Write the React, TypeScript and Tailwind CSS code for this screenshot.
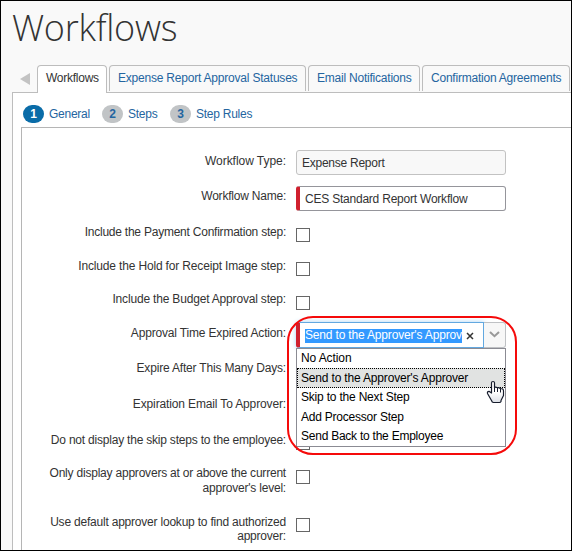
import { ReactNode } from "react";

const tabs = [
  { label: "Workflows", box: "w-[70px] tracking-[-0.25px]", active: true },
  { label: "Expense Report Approval Statuses", box: "w-[197px] tracking-[-0.21px]" },
  { label: "Email Notifications", box: "w-[112px] tracking-[-0.22px]" },
  { label: "Confirmation Agreements", box: "w-[148px] tracking-[-0.22px]" },
];

const steps = [
  { n: 1, label: "General", width: "w-[79px]" },
  { n: 2, label: "Steps", width: "w-[68px]" },
  { n: 3, label: "Step Rules", width: "w-[90px]" },
];

const options = [
  { label: "No Action", tracking: "tracking-[-0.1px]" },
  { label: "Send to the Approver's Approver", tracking: "tracking-[-0.17px]" },
  { label: "Skip to the Next Step", tracking: "tracking-[-0.2px]" },
  { label: "Add Processor Step", tracking: "tracking-[-0.22px]" },
  { label: "Send Back to the Employee", tracking: "tracking-[-0.24px]" },
];

function Checkbox() {
  return <div className="h-[14px] w-[14px] border border-[#666] bg-white" />;
}

function Row({ label, height, labelClass, controlPad = "", children }: {
  label: ReactNode;
  height: string;
  labelClass: string;
  controlPad?: string;
  children?: ReactNode;
}) {
  return (
    <div className={`flex shrink-0 ${height}`}>
      <div className={`w-[264px] shrink-0 text-right ${labelClass}`}>{label}</div>
      <div className={`ml-[10px] ${controlPad}`}>{children}</div>
    </div>
  );
}

function HandCursor() {
  return (
    <svg className="absolute left-[190px] top-[58px]" width="19" height="24" viewBox="0 0 19 24">
      <defs>
        <linearGradient id="hand" x1="0" y1="0" x2="0" y2="1">
          <stop offset="0.5" stopColor="#fff" />
          <stop offset="1" stopColor="#dcdfe6" />
        </linearGradient>
      </defs>
      <path
        d="M5.500 13V2.800Q5.500 1.500 7 1.500T8.500 2.800V7.500Q9.500 6.600 11.500 7.700Q13 7.100 14.300 8.500Q17.500 8.300 17.500 11V15.500L15 20.500V21.500Q14.500 22.500 13.500 22.500H7.500Q6 22.500 5.500 20.500L1.500 13.500Q1 11.500 3 11.300Z"
        fill="url(#hand)"
        stroke="#161c2c"
        strokeWidth="1.2"
        strokeLinejoin="round"
      />
      <path d="M8.500 7.500V12M11.500 8V12M14.500 9V12.500" stroke="#161c2c" strokeWidth="1" fill="none" />
    </svg>
  );
}

function ActionSelect() {
  return (
    <div className="relative h-[26px] w-[210px]">
      <div className="flex h-[26px] w-[210px]">
        <div className="flex w-[188px] shrink-0 rounded-l-[3px] border border-l-4 border-[#62a8e0] border-l-[#d0202e] bg-white shadow-[0_0_5px_#a9d3f5]">
          <div className="ml-[5px] mt-[6px] h-[14px] w-[157px] shrink-0 overflow-hidden whitespace-nowrap bg-[#3399ff] leading-[12px] tracking-[-0.17px] text-white">
            Send to the Approver's Approver
          </div>
          <svg className="ml-1 mt-[9px] shrink-0" width="8" height="8" viewBox="0 0 8 8">
            <path d="M1 1L7 7M7 1L1 7" stroke="#333" strokeWidth="1.5" />
          </svg>
        </div>
        <div className="flex w-[22px] shrink-0 items-center justify-center rounded-r-[3px] border border-l-0 border-[#bfc1c4] bg-[#f7f7f7]">
          <svg className="-mt-[2px]" width="11" height="7" viewBox="0 0 11 7">
            <path d="M1 1L5.500 5.200L10 1" stroke="#999" strokeWidth="2" fill="none" />
          </svg>
        </div>
      </div>
      <div className="absolute left-0 top-[26px] z-10 flex h-[99px] w-[210px] flex-col border border-[#8b8b93] bg-white text-black">
        {options.map((o, i) => (
          <div
            key={o.label}
            className={`${o.tracking} ${
              i === 1
                ? "h-5 border border-dotted border-black bg-[#e1e3e2] pl-[3px] leading-[18px]"
                : "h-[19.500px] pl-1 leading-[19px]"
            }`}
          >
            {o.label}
          </div>
        ))}
      </div>
      <div className="absolute -left-[9px] -top-[6px] z-20 h-[139px] w-[230px] rounded-[26px] border-2 border-[#f50a0a]" />
      <div className="absolute left-0 top-0 z-30">
        <HandCursor />
      </div>
    </div>
  );
}

export default function App() {
  return (
    <div className="flex h-[551px] w-[572px] flex-col overflow-hidden border border-black bg-[#f9f9f9] font-['Liberation_Sans',Arial,sans-serif] text-[12px] text-[#333]">
      <h1 className="h-16 shrink-0 pl-[11px] pt-[5px] font-['Open_Sans',sans-serif] text-[36px] font-light leading-[44px] tracking-[-0.25px]">
        Workflows
      </h1>

      <div className="flex h-[27px] shrink-0 pl-[19px]">
        <svg className="mt-2 mr-[7px] shrink-0" width="10" height="12" viewBox="0 0 10 12">
          <path d="M0 6L10 0V12Z" fill="#c3c3c3" />
        </svg>
        <div className="flex gap-[2px]">
          {tabs.map((t) => (
            <div
              key={t.label}
              className={`shrink-0 whitespace-nowrap rounded-t-[4px] border border-b-0 border-[#bdbdbd] pl-2 leading-[25px] ${t.box} ${
                t.active ? "relative z-10 h-7 bg-white text-[#333]" : "h-[26px] bg-[#f9f9f9] text-[#2465a0]"
              }`}
            >
              {t.label}
            </div>
          ))}
        </div>
      </div>

      <div className="ml-[11px] flex grow flex-col border-l border-t border-[#bdbdbd] bg-white pl-2">
        <div className="flex h-[34px] shrink-0 pl-[2px] pt-3 tracking-[-0.25px]">
          {steps.map((s) => (
            <div key={s.n} className={`flex h-[18px] items-center ${s.width}`}>
              <span
                className={`mr-[5px] flex h-[18px] w-[21px] shrink-0 items-center justify-center rounded-full font-bold ${
                  s.n === 1 ? "bg-[#0a6ca8] text-white" : "bg-[#c1c4c6] text-[#2465a0]"
                }`}
              >
                {s.n}
              </span>
              <span className="whitespace-nowrap text-[#2465a0]">{s.label}</span>
            </div>
          ))}
        </div>

        <div className="flex grow flex-col border-l border-t border-[#b5b5b5] pt-[22px]">
          <Row label="Workflow Type:" height="h-9" labelClass="pt-1 leading-[15px] tracking-[-0.04px]">
            <div className="h-[25px] w-[210px] rounded-[3px] border border-[#c2c2c2] bg-[#f8f8f8] pl-[5px] leading-[24px] tracking-[-0.25px]">
              Expense Report
            </div>
          </Row>
          <Row label="Workflow Name:" height="h-9" labelClass="pt-[3px] leading-[15px] tracking-[-0.22px]">
            <div className="h-[25px] w-[210px] rounded-[3px] border border-l-4 border-[#95959b] border-l-[#d0202e] bg-white pl-[5px] leading-[24px] tracking-[-0.22px]">
              CES Standard Report Workflow
            </div>
          </Row>
          <Row label="Include the Payment Confirmation step:" height="h-[34px]" labelClass="pt-[3px] leading-[15px] tracking-[-0.23px]" controlPad="pt-[6px]">
            <Checkbox />
          </Row>
          <Row label="Include the Hold for Receipt Image step:" height="h-[34px]" labelClass="pt-[3px] leading-[15px] tracking-[-0.16px]" controlPad="pt-[6px]">
            <Checkbox />
          </Row>
          <Row label="Include the Budget Approval step:" height="h-8" labelClass="pt-[2px] leading-[15px] tracking-[-0.18px]" controlPad="pt-[6px]">
            <Checkbox />
          </Row>
          <Row label="Approval Time Expired Action:" height="h-9" labelClass="pt-1 leading-[15px] tracking-[-0.17px]">
            <ActionSelect />
          </Row>
          <Row label="Expire After This Many Days:" height="h-9" labelClass="pt-[3px] leading-[15px] tracking-[-0.18px]" />
          <Row label="Expiration Email To Approver:" height="h-9" labelClass="pt-[3px] leading-[15px] tracking-[-0.14px]" />
          <Row label="Do not display the skip steps to the employee:" height="h-[33px]" labelClass="pt-[3px] leading-[15px] tracking-[-0.21px]" controlPad="pt-[6px]">
            <Checkbox />
          </Row>
          <Row
            label={<>Only display approvers at or above the current<br />approver's level:</>}
            height="h-[49px]"
            labelClass="pt-[3px] leading-[15px] tracking-[-0.21px]"
            controlPad="pt-[7px]"
          >
            <Checkbox />
          </Row>
          <Row
            label={<>Use default approver lookup to find authorized<br />approver:</>}
            height="h-[37px]"
            labelClass="pt-[3px] leading-[14px] tracking-[-0.21px]"
            controlPad="pt-[6px]"
          >
            <Checkbox />
          </Row>
        </div>
      </div>
    </div>
  );
}
